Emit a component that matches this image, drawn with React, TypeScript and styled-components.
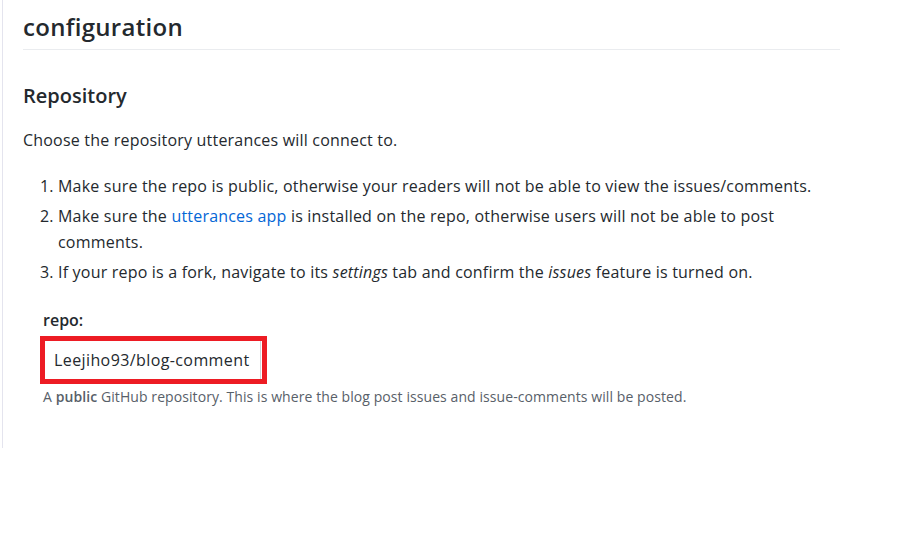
import React from "react";
import styled, { createGlobalStyle } from "styled-components";

const Global = createGlobalStyle`
  html, body { margin: 0; padding: 0; background: #ffffff; }
  body { font-family: "Open Sans", "Noto Sans", sans-serif; color: #24292e; }
`;

const Page = styled.div`
  padding-left: 2px;
`;

const Panel = styled.div`
  border-left: 1px solid #e4e4ee;
  height: 448px;
  box-sizing: border-box;
  padding: 12px 0 0 20px;
`;

const Content = styled.div`
  width: 817px;
`;

const Title = styled.h2`
  margin: 0;
  font-size: 24px;
  font-weight: 600;
  line-height: 30px;
  letter-spacing: 0.3px;
  padding-bottom: 7px;
  border-bottom: 1px solid #eaecef;
`;

const SubTitle = styled.h3`
  margin: 33px 0 0;
  font-size: 20px;
  font-weight: 600;
  line-height: 25px;
`;

const Para = styled.p`
  margin: 19px 0 0;
  font-size: 16px;
  line-height: 26px;
  letter-spacing: 0.2px;
`;

const List = styled.ol`
  margin: 20px 0 0;
  padding-left: 35px;
  font-size: 16px;
  line-height: 26px;
  letter-spacing: 0.2px;
`;

const Item = styled.li`
  & + & { margin-top: 4px; }
`;

const Link = styled.a`
  color: #0366d6;
  text-decoration: none;
`;

const Field = styled.div`
  margin: 25px 0 0 20px;
`;

const Label = styled.label`
  display: block;
  font-size: 16px;
  font-weight: 600;
  line-height: 20px;
`;

const InputWrap = styled.div`
  position: relative;
  display: inline-block;
  margin-top: 8px;
  &::after {
    content: "";
    position: absolute;
    left: -3px;
    top: -2px;
    right: -6px;
    bottom: -2px;
    border: 5px solid #ed1c24;
    pointer-events: none;
  }
`;

const Input = styled.input`
  display: block;
  width: 218px;
  height: 44px;
  box-sizing: border-box;
  padding: 0 10px;
  border: 1px solid #d1d5da;
  border-radius: 0;
  font-family: inherit;
  font-size: 16px;
  letter-spacing: 0.4px;
  color: #24292e;
  outline: none;
`;

const Note = styled.p`
  margin: 5px 0 0;
  font-size: 14px;
  line-height: 20px;
  letter-spacing: 0.08px;
  color: #586069;
  strong { font-weight: 600; }
`;

export default function App() {
  return (
    <Page>
      <Global />
      <Panel>
        <Content>
          <Title>configuration</Title>
          <SubTitle>Repository</SubTitle>
          <Para>Choose the repository utterances will connect to.</Para>
          <List>
            <Item>
              Make sure the repo is public, otherwise your readers will not be able to view the issues/comments.
            </Item>
            <Item>
              Make sure the <Link href="#">utterances app</Link> is installed on the repo, otherwise users will not be able to post comments.
            </Item>
            <Item>
              If your repo is a fork, navigate to its <em>settings</em> tab and confirm the <em>issues</em> feature is turned on.
            </Item>
          </List>
          <Field>
            <Label htmlFor="repo">repo:</Label>
            <InputWrap>
              <Input id="repo" type="text" defaultValue="Leejiho93/blog-comment" />
            </InputWrap>
            <Note>
              A <strong>public</strong> GitHub repository. This is where the blog post issues and issue-comments will be posted.
            </Note>
          </Field>
        </Content>
      </Panel>
    </Page>
  );
}
